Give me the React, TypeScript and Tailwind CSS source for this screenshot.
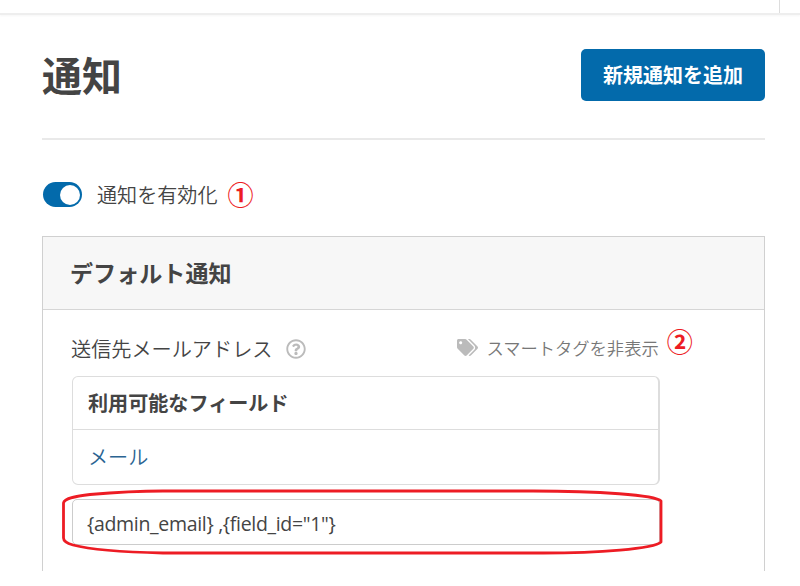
import { useState } from "react";
import { FaRegQuestionCircle, FaTags } from "react-icons/fa";

function StepMark({ children, className }: { children: string; className?: string }) {
  return (
    <span className={`block text-[26px] leading-[25px] font-bold whitespace-nowrap text-[#ed1c24] ${className ?? ""}`}>
      {children}
    </span>
  );
}

export default function App() {
  const [enabled, setEnabled] = useState(true);
  const [recipients, setRecipients] = useState('{admin_email} ,{field_id="1"}');

  return (
    <div className="h-[586px] w-[800px] overflow-hidden bg-white font-['Noto_Sans_CJK_JP',sans-serif] text-[#444]">
      {/* Toolbar edge */}
      <div className="flex h-[15px] justify-end border-b-2 border-[#eee] shadow-[0_1px_2px_rgba(0,0,0,0.04)]">
        <div className="w-[21px] border-l border-[#ddd]" />
      </div>

      <main className="ml-[42px] w-[723px]">
        <header className="flex h-[125px] items-start justify-between border-b-2 border-[#e9e9e9] pt-[34px]">
          <h1 className="text-[40px] leading-[50px] font-bold">通知</h1>
          <button className="h-[52px] w-[184px] rounded-[5px] bg-[#036aab] text-[20px] font-bold text-white">
            新規通知を追加
          </button>
        </header>

        <div className="mt-[42px] flex h-[25px] items-center">
          <button
            role="switch"
            aria-checked={enabled}
            onClick={() => setEnabled(!enabled)}
            className={`ml-px flex h-[25px] w-[39px] items-center rounded-full px-[2px] ${enabled ? "justify-end bg-[#036aab]" : "justify-start bg-[#999]"}`}
          >
            <span className="h-[20px] w-[20px] rounded-full bg-white" />
          </button>
          <span className="ml-[15px] text-[20.1px] leading-[25px] font-[350]">通知を有効化</span>
          <StepMark className="mb-[2px] ml-[10px]">①</StepMark>
        </div>

        <section className="mt-[29px] h-[335px] border border-b-0 border-[#d0d0d0]">
          <h2 className="h-[73px] border-b border-[#d6d6d6] bg-[#f7f7f7] pl-[27px] text-[23.1px] leading-[71px] font-bold">
            デフォルト通知
          </h2>

          <div className="pl-[29px]">
            <div className="flex h-[66px] items-start pt-[18px]">
              <span className="-ml-px mt-[8px] text-[20.15px] leading-[26px] font-[350]">送信先メールアドレス</span>
              <FaRegQuestionCircle className="mt-[11px] ml-[14px] h-5 w-5 text-[#bbb]" />
              <a className="mt-[8px] ml-[151px] flex items-center text-[#777]">
                <FaTags className="mb-[2px] h-[21px] w-[21px] text-[#bbb]" />
                <span className="ml-[8px] text-[17.3px] leading-[24px] font-[350]">スマートタグを非表示</span>
              </a>
              <StepMark className="ml-[8px]">②</StepMark>
            </div>

            <div className="h-[109px] w-[588px] rounded-[6px] border border-r-2 border-[#ddd]">
              <div className="h-[53px] border-b border-[#ddd] pl-[15px] text-[20.1px] leading-[52px] font-bold">
                利用可能なフィールド
              </div>
              <a className="block pl-[15px] text-[20.1px] leading-[54px] font-[350] text-[#2b6492]">メール</a>
            </div>

            <div className="relative mt-[14px]">
              <input
                value={recipients}
                onChange={(e) => setRecipients(e.target.value)}
                className="block h-[46px] w-[588px] rounded-[5px] border border-[#ccc] px-[14px] pt-[3px] font-['Open_Sans','Noto_Sans',sans-serif] text-[19.5px] tracking-[-0.32px] outline-none"
              />
              {/* Hand-drawn highlight round the field */}
              <svg
                className="pointer-events-none absolute -top-[14px] -left-[14px]"
                width="612"
                height="76"
                fill="none"
                stroke="#ed1c24"
                strokeWidth="2.8"
                strokeLinejoin="round"
              >
                <path d="M5.5 46V18C6 13 20 11 32 9.5C55 7.5 75 6 105 6H475C540 6 597 10 603 16V57C596 64 540 68 485 68H105C60 67 30 64 15 60C8 58 5.5 56 5.5 53Z" />
              </svg>
            </div>
          </div>
        </section>
      </main>
    </div>
  );
}
